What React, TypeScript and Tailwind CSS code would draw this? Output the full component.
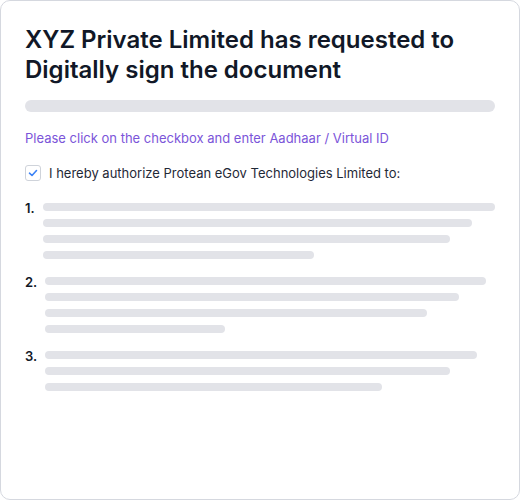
import React from "react";

const Bar = ({ w }: { w: number }) => (
  <div className="h-2 rounded-full bg-[#e2e3e8]" style={{ width: w }} />
);

export default function App() {
  const items: { n: string; bars: number[] }[] = [
    { n: "1.", bars: [452, 429, 407, 271] },
    { n: "2.", bars: [441, 414, 382, 180] },
    { n: "3.", bars: [432, 405, 337] },
  ];
  return (
    <div className="w-[520px] h-[500px] bg-white font-['Inter',sans-serif]">
      <div className="w-full h-full border border-[#d5d8df] rounded-[10px] px-6 pt-[24px]">
        <h1 className="text-[24px] leading-[30px] font-semibold text-[#111827]">
          XYZ Private Limited has requested to Digitally sign the document
        </h1>
        <div className="mt-[15px] h-3 w-[470px] rounded-md bg-[#e2e3e8]" />
        <p className="mt-[16px] text-[13px] leading-5 text-[#7b55d9]">
          Please click on the checkbox and enter Aadhaar / Virtual ID
        </p>
        <div className="mt-[15px] flex items-center gap-2">
          <div className="w-4 h-4 rounded-[3px] border border-[#cfd3da] flex items-center justify-center bg-white">
            <svg width="10" height="10" viewBox="0 0 10 10" fill="none">
              <path d="M1.5 5.2 L4 7.5 L8.5 2.5" stroke="#3b82f6" strokeWidth="1.6" strokeLinecap="round" strokeLinejoin="round" />
            </svg>
          </div>
          <span className="text-[13px] leading-5 text-[#1f2937]">
            I hereby authorize Protean eGov Technologies Limited to:
          </span>
        </div>
        <div className="mt-[20px] flex flex-col gap-[18px]">
          {items.map((it) => (
            <div key={it.n} className="flex gap-2">
              <span className="text-[13px] leading-[8px] pt-[1px] font-semibold text-[#111827]">
                {it.n}
              </span>
              <div className="flex flex-col gap-2">
                {it.bars.map((w, i) => (
                  <Bar key={i} w={w} />
                ))}
              </div>
            </div>
          ))}
        </div>
      </div>
    </div>
  );
}
